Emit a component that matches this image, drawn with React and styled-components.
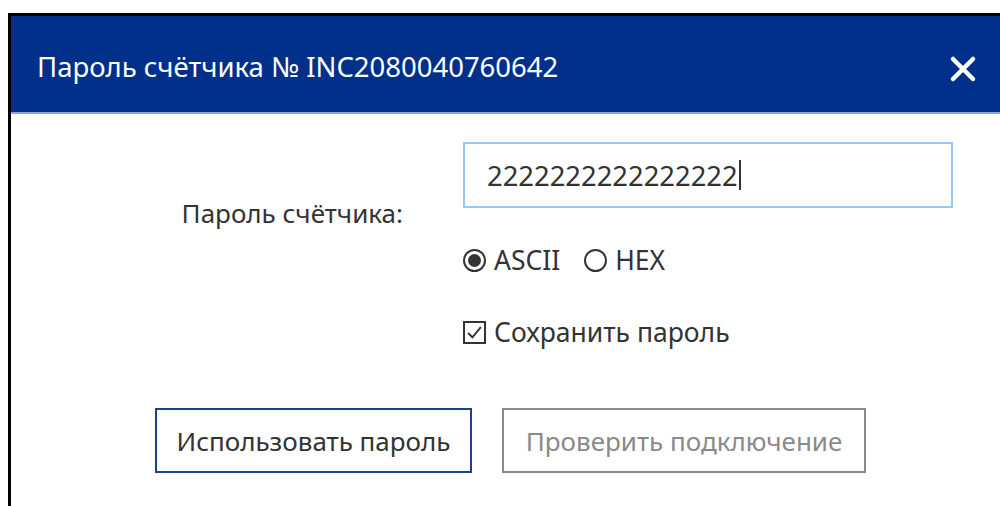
import React, { useState } from 'react'
import styled, { createGlobalStyle } from 'styled-components'

const colors = {
  navy: '#00308a',
  navyLine: '#8da6d6',
  text: '#333333',
  muted: '#8a8a8a',
  focus: '#99c8f5',
  primaryBorder: '#1d3f8c',
}

const GlobalStyle = createGlobalStyle`
  html, body {
    margin: 0;
    padding: 0;
    background: #ffffff;
  }
  body {
    font-family: 'Noto Sans', 'Open Sans', sans-serif;
    color: ${colors.text};
  }
`

const Page = styled.div`
  padding: 13px 0 0 8px;
  height: 506px;
  box-sizing: border-box;
  overflow: hidden;
`

const Dialog = styled.div`
  border-top: 3px solid #000;
  border-left: 3px solid #000;
  height: 100%;
  box-sizing: border-box;
  background: #fff;
`

const Header = styled.div`
  height: 98px;
  background: ${colors.navy};
  border-bottom: 2px solid ${colors.navyLine};
  display: flex;
  align-items: center;
  justify-content: space-between;
  padding: 4px 20px 0 26px;
  box-sizing: border-box;
`

const Title = styled.h2`
  margin: 0;
  font-size: 27.5px;
  font-weight: 400;
  color: #fff;
`

const CloseButton = styled.button`
  border: none;
  background: transparent;
  padding: 0;
  margin-top: 6px;
  width: 34px;
  height: 34px;
  display: flex;
  align-items: center;
  justify-content: center;
  cursor: pointer;
`

const Form = styled.form`
  display: grid;
  grid-template-columns: 452px 490px;
  grid-template-rows: auto auto auto;
  padding-top: 28px;
`

const FieldLabel = styled.label`
  grid-row: 1 / 3;
  align-self: center;
  justify-self: end;
  padding: 8px 60px 0 0;
  font-size: 26px;
  line-height: 30px;
`

const PasswordInput = styled.div`
  height: 66px;
  border: 2px solid ${colors.focus};
  box-sizing: border-box;
  display: flex;
  align-items: center;
  padding-left: 22px;
  font-size: 27.4px;
  color: ${colors.text};
`

const Caret = styled.span`
  display: inline-block;
  width: 2px;
  height: 30px;
  background: #333;
  margin-left: 1px;
`

const OptionRow = styled.div`
  grid-column: 2;
  display: flex;
  align-items: center;
  gap: 24px;
  margin-top: ${p => p.$top}px;
  font-size: 26.5px;
  line-height: 30px;
`

const Option = styled.label`
  display: flex;
  align-items: center;
  gap: 8px;
  cursor: pointer;
`

const RadioMark = styled.span`
  width: 23px;
  height: 23px;
  border: 2px solid #333;
  border-radius: 50%;
  box-sizing: border-box;
  display: flex;
  align-items: center;
  justify-content: center;
  &::after {
    content: '';
    width: 13px;
    height: 13px;
    border-radius: 50%;
    background: ${p => (p.$on ? '#333' : 'transparent')};
  }
`

const CheckMark = styled.span`
  width: 23px;
  height: 23px;
  border: 2px solid #333;
  box-sizing: border-box;
  display: flex;
  align-items: center;
  justify-content: center;
`

const Actions = styled.div`
  grid-column: 1 / 3;
  display: flex;
  gap: 30px;
  margin-top: 61px;
  padding-left: 144px;
`

const Button = styled.button`
  height: 65px;
  width: ${p => p.$width}px;
  padding: 0;
  background: #fff;
  font-family: inherit;
  font-size: 26px;
  border: 2px solid ${p => (p.$primary ? colors.primaryBorder : colors.muted)};
  color: ${p => (p.$primary ? colors.text : colors.muted)};
  cursor: ${p => (p.$primary ? 'pointer' : 'default')};
`

export default function App() {
  const [mode, setMode] = useState('ascii')
  const [save, setSave] = useState(true)

  return (
    <Page>
      <GlobalStyle />
      <Dialog>
        <Header>
          <Title>Пароль счётчика № INC2080040760642</Title>
          <CloseButton aria-label="Закрыть">
            <svg width="28" height="28" viewBox="0 0 28 28">
              <path d="M4 4 L24 24 M24 4 L4 24" stroke="#fff" strokeWidth="4.5" strokeLinecap="round" />
            </svg>
          </CloseButton>
        </Header>
        <Form onSubmit={e => e.preventDefault()}>
          <FieldLabel>Пароль счётчика:</FieldLabel>
          <PasswordInput>
            2222222222222222
            <Caret />
          </PasswordInput>
          <OptionRow $top={37}>
            <Option onClick={() => setMode('ascii')}>
              <RadioMark $on={mode === 'ascii'} />
              ASCII
            </Option>
            <Option onClick={() => setMode('hex')}>
              <RadioMark $on={mode === 'hex'} />
              HEX
            </Option>
          </OptionRow>
          <OptionRow $top={42}>
            <Option onClick={() => setSave(!save)}>
              <CheckMark>
                {save && (
                  <svg width="17" height="17" viewBox="0 0 16 16">
                    <path d="M2 8.5 L6 12.5 L14 3" fill="none" stroke="#333" strokeWidth="1.8" />
                  </svg>
                )}
              </CheckMark>
              Сохранить пароль
            </Option>
          </OptionRow>
          <Actions>
            <Button $primary $width={317}>Использовать пароль</Button>
            <Button $width={364}>Проверить подключение</Button>
          </Actions>
        </Form>
      </Dialog>
    </Page>
  )
}
